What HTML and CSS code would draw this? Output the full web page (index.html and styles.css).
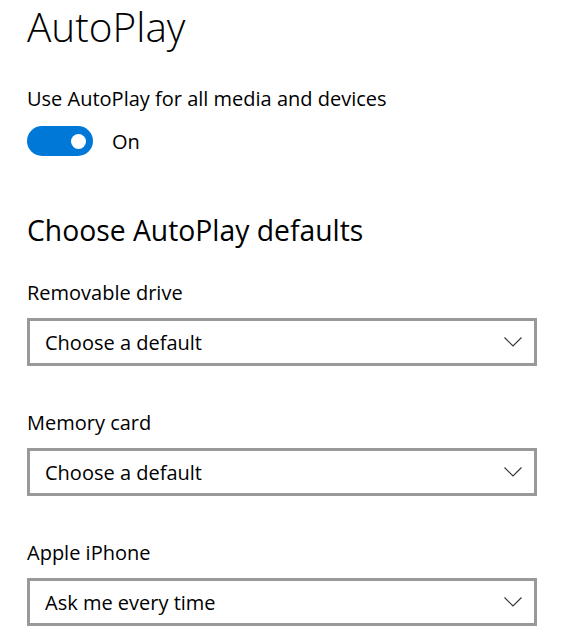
FILE: index.html
```html
<!DOCTYPE html>
<html lang="en">
<head>
<meta charset="utf-8">
<title>AutoPlay</title>
<link rel="stylesheet" href="styles.css">
</head>
<body>
<main class="page">
  <h1 class="title">AutoPlay</h1>
  <section class="setting">
    <p class="label">Use AutoPlay for all media and devices</p>
    <div class="toggle-row">
      <span class="toggle"><span class="knob"></span></span>
      <span class="toggle-text">On</span>
    </div>
  </section>
  <h2 class="subtitle">Choose AutoPlay defaults</h2>
  <div class="field">
    <p class="label">Removable drive</p>
    <div class="select">
      <span class="select-text">Choose a default</span>
      <svg class="chevron" width="18" height="10" viewBox="0 0 18 10"><path d="M0.5 0.5 L9 9 L17.5 0.5" fill="none" stroke="#333" stroke-width="1.1"/></svg>
    </div>
  </div>
  <div class="field">
    <p class="label">Memory card</p>
    <div class="select">
      <span class="select-text">Choose a default</span>
      <svg class="chevron" width="18" height="10" viewBox="0 0 18 10"><path d="M0.5 0.5 L9 9 L17.5 0.5" fill="none" stroke="#333" stroke-width="1.1"/></svg>
    </div>
  </div>
  <div class="field">
    <p class="label">Apple iPhone</p>
    <div class="select">
      <span class="select-text">Ask me every time</span>
      <svg class="chevron" width="18" height="10" viewBox="0 0 18 10"><path d="M0.5 0.5 L9 9 L17.5 0.5" fill="none" stroke="#333" stroke-width="1.1"/></svg>
    </div>
  </div>
</main>
</body>
</html>
```
FILE: styles.css
```css
html, body {
  margin: 0;
  background: #ffffff;
}
body {
  font-family: "Open Sans", "Noto Sans", sans-serif;
  color: #000000;
}
.page {
  padding: 0 26px 0 27px;
  width: 510px;
}
.title {
  margin: 0;
  font-size: 40.5px;
  font-weight: 300;
  line-height: 54px;
}
.setting {
  margin-top: 31px;
}
.label {
  margin: 0;
  font-size: 20px;
  line-height: 28px;
}
.toggle-row {
  display: flex;
  align-items: center;
  gap: 19px;
  margin-top: 13px;
}
.toggle {
  display: flex;
  align-items: center;
  justify-content: flex-end;
  width: 66px;
  height: 30px;
  border-radius: 15px;
  background: #0078d7;
  padding-right: 7px;
  box-sizing: border-box;
}
.knob {
  width: 15px;
  height: 15px;
  border-radius: 50%;
  background: #ffffff;
}
.toggle-text {
  font-size: 20px;
}
.subtitle {
  margin: 56px 0 0;
  font-size: 28.3px;
  font-weight: 400;
  line-height: 36px;
}
.field {
  margin-top: 31px;
}
.field + .field {
  margin-top: 43px;
}
.select {
  margin-top: 11px;
  height: 48px;
  box-sizing: border-box;
  border: 3px solid #999999;
  display: flex;
  align-items: center;
  justify-content: space-between;
  padding: 0 12px 0 15px;
}
.select-text {
  font-size: 20px;
}
```
